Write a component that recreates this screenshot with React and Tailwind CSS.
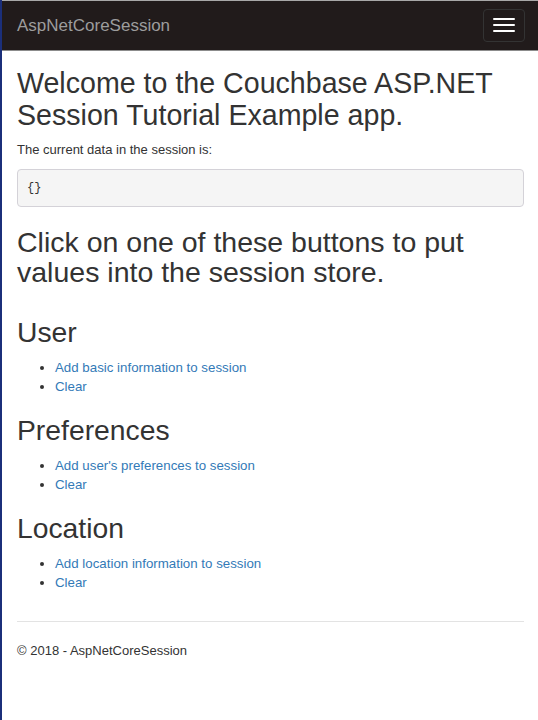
import React from 'react';

const sections = [
  { title: 'User', action: 'Add basic information to session' },
  { title: 'Preferences', action: "Add user's preferences to session" },
  { title: 'Location', action: 'Add location information to session' },
];

const Navbar = () => (
  <div className="h-[51px] bg-[#211b1b] border-t border-[#a8a8a8] border-b border-b-[#8c8c8c] flex items-center justify-between pl-[15px] pr-[13px]">
    <a href="#" className="text-[17px] text-[#9d9d9d] leading-5">AspNetCoreSession</a>
    <button className="w-[42px] h-[33px] mt-[-1px] rounded-[4px] border border-[#333] flex flex-col items-center justify-center gap-[4px]">
      <span className="block w-[22px] h-[2px] bg-white rounded-[1px]" />
      <span className="block w-[22px] h-[2px] bg-white rounded-[1px]" />
      <span className="block w-[22px] h-[2px] bg-white rounded-[1px]" />
    </button>
  </div>
);

const Section = ({ title, action }) => (
  <div className="flex flex-col">
    <h3 className="mt-[19px] text-[28.3px] leading-[31px] font-normal">{title}</h3>
    <ul className="mt-[10px] list-disc pl-[38px] text-[13.3px] leading-[19px]">
      <li><a href="#" className="text-[#337ab7]">{action}</a></li>
      <li><a href="#" className="text-[#337ab7]">Clear</a></li>
    </ul>
  </div>
);

const App = () => {
  return (
    <div className="min-h-[720px] flex bg-white text-[#333]" style={{ fontFamily: '"Liberation Sans", Arial, sans-serif' }}>
      <div className="w-[2px] shrink-0 bg-[#1b2f7a]" />
      <div className="flex-1 flex flex-col">
        <Navbar />
        <div className="flex flex-col pl-[15px] pr-[14px]">
          <h1 className="mt-[16px] text-[28.6px] leading-[32px] font-normal">
            Welcome to the Couchbase ASP.NET Session Tutorial Example app.
          </h1>
          <p className="mt-[9px] text-[13px] leading-[19px]">The current data in the session is:</p>
          <pre className="mt-[10px] px-[9px] py-[9px] bg-[#f5f5f5] border border-[#d4d2d8] rounded-[4px] text-[12px] leading-[18px] text-[#333]" style={{ fontFamily: '"Liberation Mono", "DejaVu Sans Mono", monospace' }}>
            {'{}'}
          </pre>
          <h2 className="mt-[20px] mb-[11px] text-[28.5px] leading-[30px] font-normal">
            Click on one of these buttons to put values into the session store.
          </h2>
          {sections.map((s) => (
            <Section key={s.title} title={s.title} action={s.action} />
          ))}
          <hr className="mt-[29px] border-0 border-t border-[#e3e3e3]" />
          <footer className="mt-[19px] text-[13px] leading-[19px]">© 2018 - AspNetCoreSession</footer>
        </div>
      </div>
    </div>
  );
};

export default App;
